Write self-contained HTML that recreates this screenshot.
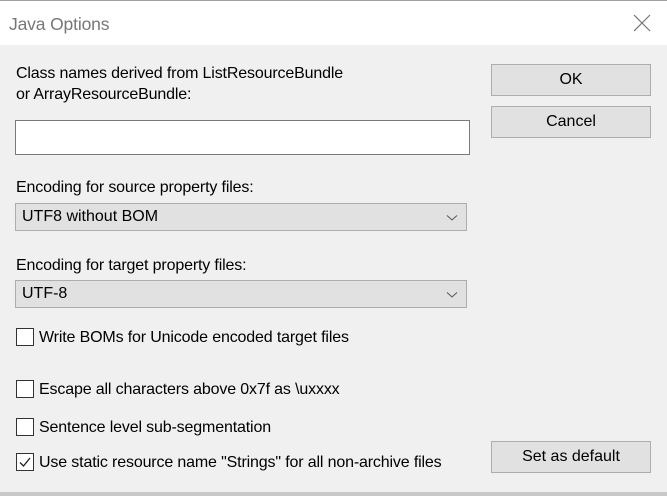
<!DOCTYPE html>
<html><head><meta charset="utf-8"><style>
*{margin:0;padding:0;box-sizing:border-box}
body{width:667px;height:496px;background:#f0f0f0;position:relative;overflow:hidden;font-family:"Liberation Sans",sans-serif;font-size:16px;color:#000}
.t{position:absolute;white-space:nowrap;letter-spacing:-0.15px}
#title{position:absolute;left:0;top:0;width:667px;height:45px;background:#fff;border-top:1px solid #a0a0a0}
.btn{position:absolute;left:491px;width:160px;height:32px;background:#e1e1e1;border:1px solid #adadad;text-align:center;line-height:30px}
.combo{position:absolute;left:15px;width:452px;height:28px;background:#e1e1e1;border:1px solid #adadad;line-height:26px;padding-left:6px}
.combo svg{position:absolute;right:8px;top:10px}
.cb{position:absolute;left:16px;width:18px;height:18px;background:#fff;border:1px solid #333}
</style></head><body>
<div id="title">
<div class="t" style="left:9px;top:13px;font-size:17.5px;color:#777">Java Options</div>
<svg style="position:absolute;left:633px;top:13px" width="18" height="18" viewBox="0 0 18 18"><path d="M1 1L17 17M17 1L1 17" stroke="#777" stroke-width="1.2" fill="none"/></svg>
</div>
<div class="t" style="left:16px;top:65px">Class names derived from ListResourceBundle</div>
<div class="t" style="left:16px;top:86px">or ArrayResourceBundle:</div>
<div style="position:absolute;left:15px;top:120px;width:455px;height:35px;background:#fff;border:1px solid #7a7a7a"></div>
<div class="t" style="left:16px;top:179px">Encoding for source property files:</div>
<div class="combo" style="top:203px">UTF8 without BOM<svg width="12" height="8" viewBox="0 0 12 8"><path d="M1 1.5L6 6L11 1.5" stroke="#555" fill="none"/></svg></div>
<div class="t" style="left:16px;top:257px">Encoding for target property files:</div>
<div class="combo" style="top:280px">UTF-8<svg width="12" height="8" viewBox="0 0 12 8"><path d="M1 1.5L6 6L11 1.5" stroke="#555" fill="none"/></svg></div>
<div class="cb" style="top:328px"></div><div class="t" style="left:39px;top:329px">Write BOMs for Unicode encoded target files</div>
<div class="cb" style="top:380px"></div><div class="t" style="left:39px;top:381px">Escape all characters above 0x7f as \uxxxx</div>
<div class="cb" style="top:418px"></div><div class="t" style="left:39px;top:419px">Sentence level sub-segmentation</div>
<div class="cb" style="top:453px"><svg width="16" height="16" viewBox="0 0 16 16" style="position:absolute;left:0;top:0"><path d="M3 8.5L6.5 12L13 4" stroke="#222" stroke-width="1.3" fill="none"/></svg></div><div class="t" style="left:39px;top:454px">Use static resource name "Strings" for all non-archive files</div>
<div class="btn" style="top:64px">OK</div>
<div class="btn" style="top:106px">Cancel</div>
<div class="btn" style="top:441px">Set as default</div>
<div style="position:absolute;left:0;top:492px;width:667px;height:4px;background:#c8c8c8"></div>
</body></html>
